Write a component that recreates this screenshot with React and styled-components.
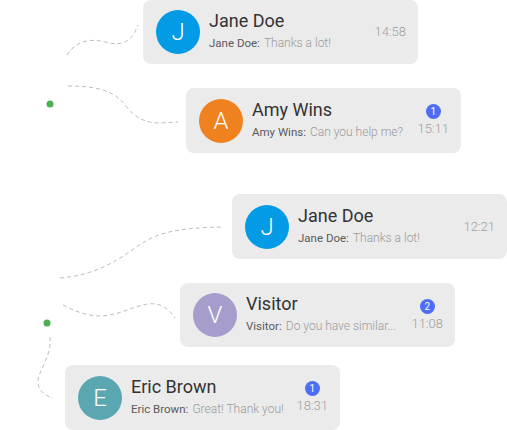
import React from "react";
import styled, { createGlobalStyle } from "styled-components";

const Global = createGlobalStyle`
  html, body { margin: 0; padding: 0; background: #ffffff; overflow: hidden; }
  body { font-family: Roboto, "Liberation Sans", sans-serif; }
`;

const Canvas = styled.div`
  position: relative;
  width: 507px;
  height: 430px;
  overflow: hidden;
`;

const Connectors = styled.svg`
  position: absolute;
  left: 0;
  top: 0;
  width: 507px;
  height: 430px;
  pointer-events: none;
`;

const Stack = styled.div`
  display: flex;
  flex-direction: column;
  align-items: flex-start;
`;

const Card = styled.div`
  display: flex;
  align-items: center;
  box-sizing: border-box;
  width: 275px;
  height: ${(p) => p.$h || 64}px;
  margin-left: ${(p) => p.$left}px;
  margin-top: ${(p) => p.$top}px;
  padding: 0 12px 0 13px;
  background: #ebebeb;
  border-radius: 8px;
`;

const Avatar = styled.div`
  flex: none;
  width: 44px;
  height: 44px;
  border-radius: 50%;
  background: ${(p) => p.$color};
  color: #ffffff;
  display: flex;
  align-items: center;
  justify-content: center;
  font-size: 24px;
  font-weight: 300;
`;

const Body = styled.div`
  flex: 1;
  min-width: 0;
  display: flex;
  flex-direction: column;
  gap: 4px;
  margin-left: 9px;
  padding-bottom: 4px;
`;

const Name = styled.div`
  font-size: 18px;
  line-height: 22px;
  color: #333333;
  white-space: nowrap;
`;

const Preview = styled.div`
  font-size: 11.5px;
  line-height: 14px;
  white-space: nowrap;
  display: flex;
  align-items: baseline;
`;

const Sender = styled.span`
  color: #5a5a5a;
  margin-right: 4px;
`;

const Message = styled.span`
  color: #9a9a9a;
  font-size: 12px;
  font-weight: 300;
`;

const Meta = styled.div`
  flex: none;
  display: flex;
  flex-direction: column;
  align-items: center;
  gap: 2px;
`;

const Badge = styled.div`
  width: 15px;
  height: 15px;
  border-radius: 50%;
  background: #4f6cf6;
  color: #ffffff;
  font-size: 10px;
  line-height: 15px;
  text-align: center;
`;

const Time = styled.div`
  font-size: 13px;
  line-height: 16px;
  color: #a0a0a0;
  font-weight: 300;
`;

const chats = [
  { left: 143, top: 0, letter: "J", color: "#039be5", name: "Jane Doe", msg: "Thanks a lot!", time: "14:58" },
  { left: 186, top: 24, h: 65, letter: "A", color: "#f0811f", name: "Amy Wins", msg: "Can you help me?", time: "15:11", badge: 1 },
  { left: 232, top: 41, h: 65, letter: "J", color: "#039be5", name: "Jane Doe", msg: "Thanks a lot!", time: "12:21" },
  { left: 180, top: 24, letter: "V", color: "#a79dcd", name: "Visitor", msg: "Do you have similar...", time: "11:08", badge: 2 },
  { left: 65, top: 18, h: 65, letter: "E", color: "#5aa7b1", name: "Eric Brown", msg: "Great! Thank you!", time: "18:31", badge: 1 },
];

const dash = { fill: "none", stroke: "#bdbdbd", strokeWidth: 1, strokeDasharray: "4 3" };

export default function App() {
  return (
    <Canvas>
      <Global />
      <Stack>
        {chats.map((c, i) => (
          <Card key={i} $left={c.left} $top={c.top} $h={c.h}>
            <Avatar $color={c.color}>{c.letter}</Avatar>
            <Body>
              <Name>{c.name}</Name>
              <Preview>
                <Sender>{c.name}:</Sender>
                <Message>{c.msg}</Message>
              </Preview>
            </Body>
            <Meta>
              {c.badge ? <Badge>{c.badge}</Badge> : null}
              <Time>{c.time}</Time>
            </Meta>
          </Card>
        ))}
      </Stack>
      <Connectors viewBox="0 0 507 430">
        <path {...dash} d="M67,55 C76,41 90,38 105,42 C120,46 131,44 138,25" />
        <path {...dash} d="M68,86 C100,86 115,92 125,105 C135,118 145,123 160,123 L178,122" />
        <path {...dash} d="M60,278 C95,275 115,262 135,248 C155,234 170,228 223,227" />
        <path {...dash} d="M63,305 C80,314 95,318 110,315 C130,311 145,300 160,305 C167,308 172,313 175,318" />
        <path {...dash} d="M50,337 C52,355 40,368 38,380 C37,390 45,396 53,398" />
        <circle cx="50" cy="104" r="3.5" fill="#4caf50" />
        <circle cx="47" cy="323" r="3.5" fill="#4caf50" />
      </Connectors>
    </Canvas>
  );
}
